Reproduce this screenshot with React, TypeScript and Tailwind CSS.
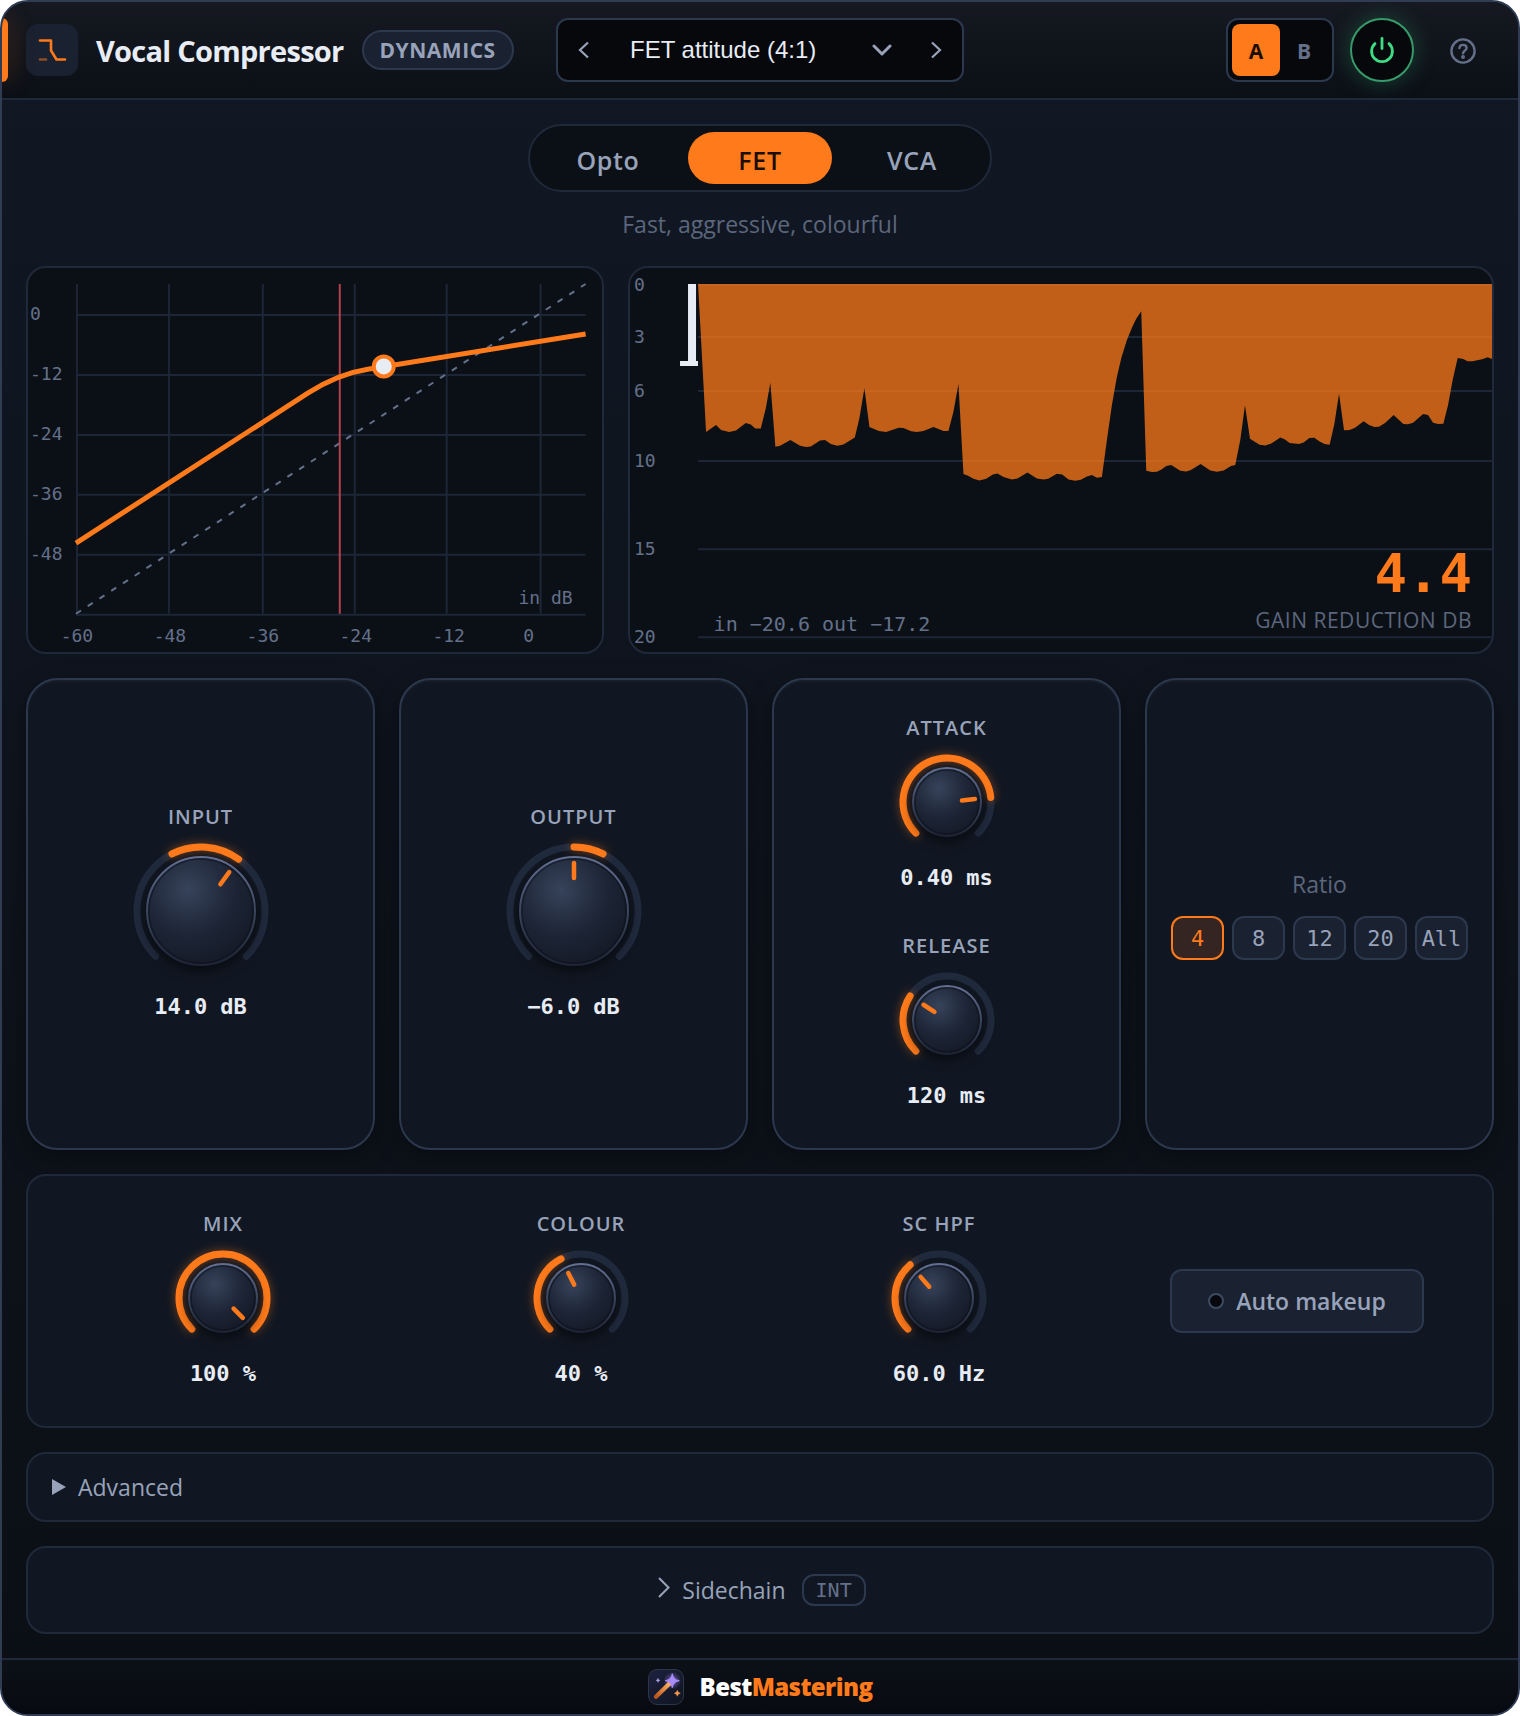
import { useState } from 'react';

const PRESETS = ['FET attitude (4:1)', 'Opto smooth (3:1)', 'VCA punch (6:1)'];

const MODES = [
    { id: 'Opto', hint: 'Smooth, slow, musical' },
    { id: 'FET', hint: 'Fast, aggressive, colourful' },
    { id: 'VCA', hint: 'Clean, punchy, precise' },
];

const RATIOS = ['4', '8', '12', '20', 'All'];

// Gain reduction history, x/y in chart units
const GR_POINTS =
    '68,16 76,164 86,157 91,162 99,164 106,162.5 115.7,155 120.7,156.5 125.3,160.5 130.7,160.5 135.7,140.5 140.3,114.7 ' +
    '145.3,178.7 150,177.7 160.3,172 170,177.7 176,179 180.7,178.3 190,172.3 195,172 200.7,176 207.3,177.7 213.3,176.3 224.7,169.3 229.3,150.3 234.3,120.3 ' +
    '239.3,159 248.7,163 256,164 268.7,159.7 273.3,160 281,163.3 286.7,164 293.3,163 303.3,159 313.3,163 318.3,163 323.3,143.7 328.3,116 ' +
    '333.3,206 338,207.7 343.3,210.7 349.3,212.3 356,210.7 362.7,206.3 367.3,205.3 373.3,209 381.7,211.3 387.3,210.3 397.3,204.3 406.7,210.3 413.3,211.3 418,210.7 426.7,205.7 432,206.3 ' +
    '438.3,211.3 445,212.7 450.7,211.7 456.7,208.3 461.7,207 466.7,209.7 471.7,209 476.7,172 481.7,137 486.7,108.7 491.3,89.3 496.7,72 501.7,59.7 506,50.7 511,43.3 ' +
    '516,202.7 521.7,204 526.7,203.7 531.3,201.3 536,198 541,197 550,202.7 556,203.3 560.7,202 570.3,196 580,202.3 586.7,203.7 593.3,202.3 600.7,198 605,197 610,172 614.7,137.3 ' +
    '619.7,170.7 629.3,176.7 635,177.3 641,175.3 650,169.3 654.7,171.3 659.3,175 668.7,176 673.3,174.3 679,170 684,169.7 689.3,173.3 694.3,176 699.3,176.7 704,156.3 708.7,125.7 ' +
    '713.7,162.3 719.3,162 724.7,159.7 733.3,153.3 738.7,157 744,159 748.7,158.7 755,154.7 763.3,147 773,156 777.7,156.3 782.7,154.7 792.7,146 797.7,147 802.7,154.7 807.7,156 813,155.7 817.7,137 822.3,112 ' +
    '827.3,90 832.7,91 837.3,93.3 842,93.3 851.7,91.3 857.3,89.3 862,91 862,16';

const polar = (c: number, r: number, deg: number) => {
    const a = (deg * Math.PI) / 180;
    return `${(c + r * Math.sin(a)).toFixed(2)} ${(c - r * Math.cos(a)).toFixed(2)}`;
};

const arc = (c: number, r: number, from: number, to: number) =>
    `M${polar(c, r, from)}A${r} ${r} 0 ${to - from > 180 ? 1 : 0} 1 ${polar(c, r, to)}`;

type KnobProps = {
    label: string;
    value: string;
    angle: number;
    from?: number;
    to?: number;
    big?: boolean;
};

function Knob({ label, value, angle, from = -135, to = angle, big = false }: KnobProps) {
    const id = label.toLowerCase().replace(' ', '-');
    const size = big ? 136 : 96;
    const c = size / 2;
    const ring = c - 4;
    const body = big ? 55 : 35;

    return (
        <div className="flex flex-col items-center">
            <label htmlFor={id} className="mb-3.5 text-[20px] leading-6 font-semibold tracking-wider text-[#98a3ba]">
                {label}
            </label>
            <div className="relative">
                <svg width={size} height={size} viewBox={`0 0 ${size} ${size}`} className="block overflow-visible">
                    <defs>
                        <radialGradient id={`${id}-body`} cx="0.38" cy="0.3" r="0.7">
                            <stop offset="0" stopColor="#37435b" />
                            <stop offset="0.6" stopColor="#1d2536" />
                            <stop offset="1" stopColor="#151b28" />
                        </radialGradient>
                        <linearGradient id={`${id}-rim`} x1="0" y1="0" x2="0" y2="1">
                            <stop offset="0" stopColor="#636f92" />
                            <stop offset="0.5" stopColor="#3a465e" />
                            <stop offset="1" stopColor="#1c2435" />
                        </linearGradient>
                    </defs>
                    <path d={arc(c, ring, -135, 135)} fill="none" stroke="#202a3d" strokeWidth="7" strokeLinecap="round" />
                    <path
                        d={arc(c, ring, from, to)}
                        fill="none"
                        stroke="#ff7a1a"
                        strokeWidth="7"
                        strokeLinecap="round"
                        className="drop-shadow-[0_0_5px_rgba(255,122,26,0.45)]"
                    />
                    <circle cx={c} cy={c} r={body} fill="#0e131c" className="drop-shadow-[0_5px_6px_rgba(0,0,0,0.55)]" />
                    <circle cx={c} cy={c} r={body - 1} fill={`url(#${id}-body)`} stroke={`url(#${id}-rim)`} strokeWidth="2" />
                    <circle cx={c} cy={c} r={body - 3} fill="none" stroke="#0c1119" strokeOpacity="0.55" strokeWidth="1.5" />
                    <path
                        d={`M${polar(c, big ? 33 : 15, angle)}L${polar(c, big ? 48 : 28, angle)}`}
                        stroke="#ff7a1a"
                        strokeWidth="4.5"
                        strokeLinecap="round"
                    />
                </svg>
                <input
                    id={id}
                    type="range"
                    min={-135}
                    max={135}
                    defaultValue={angle}
                    aria-valuetext={value}
                    className="absolute inset-0 h-full w-full cursor-pointer opacity-0"
                />
            </div>
            <output htmlFor={id} className="mt-3 font-['DejaVu_Sans_Mono',monospace] text-[22px] leading-8 font-bold text-[#e8ecf4]">
                {value}
            </output>
        </div>
    );
}

function TransferCurve() {
    const v = [49, 141, 235, 327, 419, 513];
    const h = [47, 107, 167, 227, 287, 347];
    return (
        <svg viewBox="0 0 574 384" className="block w-full font-['DejaVu_Sans_Mono',monospace] text-[18px]">
            <g stroke="#1d2636" strokeWidth="2">
                {v.map((x) => <path key={x} d={`M${x} 16V346`} />)}
                {h.map((y) => <path key={y} d={`M48 ${y}H558`} />)}
            </g>
            <path d="M48 346L558 16" stroke="#64708a" strokeWidth="2" strokeDasharray="6 8" />
            <path d="M312 16V346" stroke="#b53f4c" strokeWidth="2" />
            <path d="M48 275.3L280 125.2Q310 106 340 101.3L558 66" fill="none" stroke="#ff7a1a" strokeWidth="5" />
            <circle cx="356" cy="98.5" r="10" fill="#e8ecf4" stroke="#ff7a1a" strokeWidth="4" />
            <g fill="#64708a">
                {['0', '-12', '-24', '-36', '-48'].map((t, i) => (
                    <text key={t} x="2" y={52 + i * 60}>{t}</text>
                ))}
                <g textAnchor="middle">
                    {['-60', '-48', '-36', '-24', '-12'].map((t, i) => (
                        <text key={t} x={49 + i * 93} y="374">{t}</text>
                    ))}
                    <text x="501" y="374">0</text>
                </g>
                <text x="545" y="336" textAnchor="end">in dB</text>
            </g>
        </svg>
    );
}

function ReductionHistory() {
    const rows = [['0', 17], ['3', 69], ['6', 123], ['10', 193], ['15', 281], ['20', 369]] as const;
    return (
        <svg viewBox="0 0 862 384" className="block w-full font-['DejaVu_Sans_Mono',monospace] text-[18px]">
            {rows.map(([t, y]) => (
                <g key={t}>
                    <path d={`M68 ${y}H862`} stroke="#1d2636" strokeWidth="2" />
                    <text x="4" y={y + 6} fill="#64708a">{t}</text>
                </g>
            ))}
            <polygon points={GR_POINTS} fill="#ff7a1a" fillOpacity="0.75" />
            <path d="M58 16h8v78h-8z" fill="#e8ecf4" />
            <path d="M50 93h18v5h-18z" fill="#e8ecf4" />
        </svg>
    );
}

function WandLogo() {
    return (
        <svg width="36" height="36" viewBox="0 0 36 36">
            <defs>
                <linearGradient id="wand-bg" x1="0" y1="0" x2="1" y2="1">
                    <stop offset="0" stopColor="#1d2140" />
                    <stop offset="1" stopColor="#0f1520" />
                </linearGradient>
                <linearGradient id="wand" x1="0" y1="1" x2="1" y2="0">
                    <stop offset="0" stopColor="#b9541a" />
                    <stop offset="1" stopColor="#ffb366" />
                </linearGradient>
                <radialGradient id="wand-glow">
                    <stop offset="0" stopColor="#a78bfa" stopOpacity="0.6" />
                    <stop offset="1" stopColor="#a78bfa" stopOpacity="0" />
                </radialGradient>
            </defs>
            <rect x="0.5" y="0.5" width="35" height="35" rx="8.5" fill="url(#wand-bg)" stroke="#2a3547" />
            <circle cx="24.3" cy="11.7" r="9" fill="url(#wand-glow)" />
            <path d="M8 27.8L21.8 14.2" stroke="url(#wand)" strokeWidth="4.4" strokeLinecap="round" />
            <path d="M24.3 4.7Q25.3 10.7 31.3 11.7Q25.3 12.7 24.3 18.7Q23.3 12.7 17.3 11.7Q23.3 10.7 24.3 4.7Z" fill="#a78bfa" stroke="#a78bfa" />
            <path d="M10 9.2Q10.2 11.1 12.1 11.3Q10.2 11.5 10 13.4Q9.8 11.5 7.9 11.3Q9.8 11.1 10 9.2Z" fill="#a9a3e8" stroke="#a9a3e8" strokeWidth="0.4" />
            <path d="M29.3 21.3Q29.7 23.9 32.3 24.3Q29.7 24.7 29.3 27.3Q28.9 24.7 26.3 24.3Q28.9 23.9 29.3 21.3Z" fill="#ff9a4a" stroke="#ff9a4a" strokeWidth="0.4" />
        </svg>
    );
}

export default function App() {
    const [preset, setPreset] = useState(PRESETS[0]);
    const [slot, setSlot] = useState('A');
    const [mode, setMode] = useState('FET');
    const [ratio, setRatio] = useState('4');

    const card = 'rounded-[32px] border-2 border-[#2c384e] bg-[#111722] shadow-[0_8px_24px_rgba(0,0,0,0.35),inset_0_2px_0_rgba(255,255,255,0.03)]';

    return (
        <div className="overflow-hidden rounded-[28px] border-2 border-[#2f3c54] bg-linear-to-b from-[#111824] to-[#0b0f15] font-['Open_Sans',sans-serif] text-[#98a3ba]">
            <header className="relative grid grid-cols-[1fr_auto_1fr] items-center border-b-2 border-[#1f2939] bg-linear-to-b from-[#161921] to-[#0b0f16] px-6 py-4">
                <span className="absolute top-4 left-0 h-16 w-1.5 rounded-r-md bg-[#ff7a1a] shadow-[0_0_24px_rgba(255,122,26,0.4)]" />
                <div className="flex items-center gap-4.5">
                    <div className="rounded-xl bg-[#1a2130]">
                        <svg width="52" height="52" viewBox="0 0 52 52" fill="none" stroke="#ff7a1a" strokeWidth="2.6" strokeLinecap="round" strokeLinejoin="round">
                            <path d="M14 16.5h11v10l5.5 9h8.5" />
                            <path d="M14 35.5h6" opacity="0.5" />
                        </svg>
                    </div>
                    <h1 className="pt-0.5 text-[29px] leading-9 font-bold tracking-tight whitespace-nowrap text-[#e8ecf4]">Vocal Compressor</h1>
                    <span className="rounded-full border-2 border-[#2c384e] bg-[#1a2130] px-4 text-[21px] leading-9 font-bold tracking-wide">
                        DYNAMICS
                    </span>
                </div>

                <div className="flex h-16 rounded-xl border-2 border-[#2c384e] bg-[#07080c]">
                    <button aria-label="Previous preset" className="flex w-13 items-center justify-center">
                        <svg width="20" height="20" viewBox="0 0 20 20" fill="none" stroke="#98a3ba" strokeWidth="2.2">
                            <path d="M14 2.5L6 10l8 7.5" />
                        </svg>
                    </button>
                    <div className="relative">
                        <select
                            aria-label="Preset"
                            value={preset}
                            onChange={(e) => setPreset(e.target.value)}
                            className="h-full w-[300px] appearance-none bg-transparent pl-5 font-['Liberation_Sans',sans-serif] text-[24px] text-[#e8ecf4]"
                        >
                            {PRESETS.map((p) => <option key={p}>{p}</option>)}
                        </select>
                        <svg width="20" height="20" viewBox="0 0 20 20" fill="none" stroke="#98a3ba" strokeWidth="3" strokeLinecap="round" strokeLinejoin="round" className="pointer-events-none absolute top-5 right-[18px]">
                            <path d="M2 6l8 8 8-8" />
                        </svg>
                    </div>
                    <button aria-label="Next preset" className="flex w-13 items-center justify-center">
                        <svg width="20" height="20" viewBox="0 0 20 20" fill="none" stroke="#98a3ba" strokeWidth="2.2">
                            <path d="M6 2.5l8 7.5-8 7.5" />
                        </svg>
                    </button>
                </div>

                <div className="flex items-center justify-end gap-4">
                    <div className="flex h-16 rounded-xl border-2 border-[#2c384e] bg-[#07080c] p-1">
                        {['A', 'B'].map((s) => (
                            <button
                                key={s}
                                onClick={() => setSlot(s)}
                                className={`w-12 rounded-lg pt-1 text-[21px] font-bold ${slot === s ? 'bg-[#ff7a1a] text-[#1a0d02]' : 'text-[#64708a]'}`}
                            >
                                {s}
                            </button>
                        ))}
                    </div>
                    <button aria-label="Power" className="flex size-16 items-center justify-center rounded-full border-2 border-[#379a6b] bg-[#07080c] shadow-[0_0_24px_rgba(61,220,132,0.25)]">
                        <svg width="28" height="28" viewBox="0 0 28 28" fill="none" stroke="#3ddc84" strokeWidth="2.8" strokeLinecap="round">
                            <path d="M14 2.4v10.2" />
                            <path d="M7 7.6a10.4 10.4 0 1 0 14 0" />
                        </svg>
                    </button>
                    <button aria-label="Help" className="flex size-16 items-center justify-center">
                        <svg width="28" height="28" viewBox="0 0 28 28" fill="none" stroke="#64708a" strokeWidth="2.4" strokeLinecap="round" strokeLinejoin="round">
                            <circle cx="15" cy="15" r="11.6" />
                            <path d="M11.4 12.1c.2-2.1 1.7-3.2 3.6-3.2 2.1 0 3.6 1.3 3.6 3.1 0 2.6-3.6 2.8-3.6 5.3" />
                            <circle cx="15" cy="21.1" r="0.8" />
                        </svg>
                    </button>
                </div>
            </header>

            <main className="flex flex-col gap-6 p-6">
                <div className="flex flex-col items-center gap-4">
                    <div className="flex gap-2 rounded-full border-2 border-[#1f2939] bg-[#0b1017] p-1.5">
                        {MODES.map((m) => (
                            <button
                                key={m.id}
                                onClick={() => setMode(m.id)}
                                className={`h-13 w-36 rounded-full pt-1.5 text-[25px] font-semibold tracking-wide ${mode === m.id ? 'bg-[#ff7a1a] text-[#1a0d02]' : 'text-[#98a3ba]'}`}
                            >
                                {m.id}
                            </button>
                        ))}
                    </div>
                    <p className="pb-0.5 text-[23px] leading-8 text-[#5c667c]">{MODES.find((m) => m.id === mode)?.hint}</p>
                </div>

                <div className="grid grid-cols-[2fr_3fr] gap-6">
                    <div className="overflow-hidden rounded-[20px] border-2 border-[#1f2939] bg-[#0b1017]">
                        <TransferCurve />
                    </div>
                    <div className="relative overflow-hidden rounded-[20px] border-2 border-[#1f2939] bg-[#0b1017]">
                        <ReductionHistory />
                        <p className="absolute bottom-3.5 left-[84px] font-['DejaVu_Sans_Mono',monospace] text-[20px] leading-7 text-[#64708a]">
                            in −20.6 out −17.2
                        </p>
                        <div className="absolute right-5 bottom-4.5 text-right">
                            <p className="mb-1 font-['DejaVu_Sans_Mono',monospace] text-[54px] leading-14 font-bold text-[#ff7a1a]">4.4</p>
                            <p className="text-[21px] leading-7 tracking-wide text-[#5c667c]">GAIN REDUCTION DB</p>
                        </div>
                    </div>
                </div>

                <div className="grid grid-cols-4 gap-6">
                    <section className={`flex items-center justify-center ${card}`}>
                        <Knob label="INPUT" value="14.0 dB" angle={36} from={-27} big />
                    </section>
                    <section className={`flex items-center justify-center ${card}`}>
                        <Knob label="OUTPUT" value="−6.0 dB" angle={0} from={0} to={27} big />
                    </section>
                    <section className={`flex flex-col items-center gap-10 py-9 ${card}`}>
                        <Knob label="ATTACK" value="0.40 ms" angle={84} />
                        <Knob label="RELEASE" value="120 ms" angle={-57} />
                    </section>
                    <section className={`flex flex-col justify-center gap-4 px-6 ${card}`}>
                        <h2 className="text-center text-[23px] leading-8 text-[#5c667c]">Ratio</h2>
                        <div className="grid grid-cols-5 gap-2">
                            {RATIOS.map((r) => (
                                <button
                                    key={r}
                                    onClick={() => setRatio(r)}
                                    className={`h-11 rounded-xl border-2 font-['DejaVu_Sans_Mono',monospace] text-[22px] ${ratio === r ? 'border-[#ff7a1a] bg-[#352522] text-[#ff7a1a]' : 'border-[#2c384e] bg-[#1a2130] text-[#98a3ba]'}`}
                                >
                                    {r}
                                </button>
                            ))}
                        </div>
                    </section>
                </div>

                <section className="grid grid-cols-4 items-center gap-4 rounded-[20px] border-2 border-[#1f2939] bg-[#111722] px-6 py-9">
                    <Knob label="MIX" value="100 %" angle={135} />
                    <Knob label="COLOUR" value="40 %" angle={-27} />
                    <Knob label="SC HPF" value="60.0 Hz" angle={-41} />
                    <button className="flex h-16 items-center gap-3 justify-self-center rounded-xl border-2 border-[#2c384e] bg-[#1a2130] px-9 text-[23px] font-semibold">
                        <span className="size-4 rounded-full border-2 border-[#3d4a63] bg-[#07080c]" />
                        Auto makeup
                    </button>
                </section>

                <details className="rounded-[20px] border-2 border-[#1f2939] bg-[#111722]">
                    <summary className="flex cursor-pointer list-none items-center gap-3 px-6 py-[17px] text-[23px] leading-8">
                        <svg width="14" height="16" viewBox="0 0 14 16" fill="#98a3ba">
                            <path d="M0 0l14 8-14 8z" />
                        </svg>
                        Advanced
                    </summary>
                </details>

                <button className="flex h-22 items-center justify-center rounded-[20px] border-2 border-[#1f2939] bg-[#111722] pl-1 text-[23px]">
                    <svg width="12" height="22" viewBox="0 0 12 22" fill="none" stroke="#98a3ba" strokeWidth="2" className="mr-3 mb-1">
                        <path d="M1 1l9.500 9.500L1 20" />
                    </svg>
                    Sidechain
                    <span className="ml-4 rounded-xl border-2 border-[#2c384e] px-3 font-['DejaVu_Sans_Mono',monospace] text-[20px] leading-7 text-[#64708a]">
                        INT
                    </span>
                </button>
            </main>

            <footer className="flex h-14 items-center justify-center gap-4 border-t-2 border-[#1f2939] bg-linear-to-b from-[#0c1017] to-[#080a11]">
                <WandLogo />
                <span className="text-[24px] font-extrabold tracking-tight text-white">
                    Best<span className="text-[#ff7a1a]">Mastering</span>
                </span>
            </footer>
        </div>
    );
}
